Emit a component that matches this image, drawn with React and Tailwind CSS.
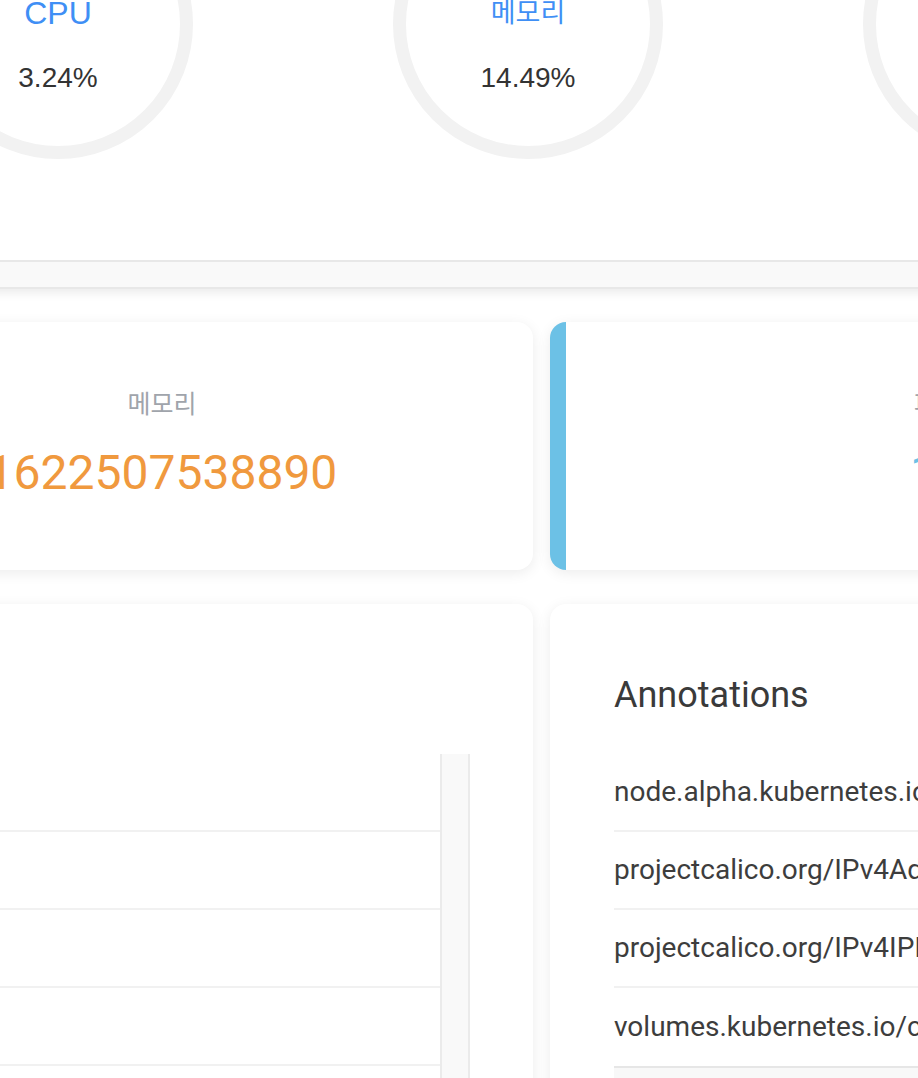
import React from "react";

const gauges = [
  { label: "CPU", value: "3.24%", korean: false },
  { label: "메모리", value: "14.49%", korean: true },
  { label: "디스크", value: "21.07%", korean: true },
];

const annotations = [
  ["node.alpha.kubernetes.io/ttl", "0"],
  ["projectcalico.org/IPv4Address", "10.0.2.15/24"],
  ["projectcalico.org/IPv4IPIPTunnelAddr", "192.168.104.0"],
  ["volumes.kubernetes.io/controller-managed-attach-detach", "true"],
];

const Gauge = ({ label, value, korean }) => (
  <div className="w-[270px] h-[270px] shrink-0 rounded-full border-[13px] border-[#f2f2f2] flex flex-col items-center pt-[87px]">
    <div
      className={`leading-[48px] text-[#3f8ff5] ${
        korean ? "text-[27px]" : "text-[32px]"
      }`}
    >
      {label}
    </div>
    <div className="mt-[20px] text-[28px] leading-[42px] text-[#333333]">
      {value}
    </div>
  </div>
);

const StatCard = ({ label, value, border, color }) => (
  <div
    className={`w-[758px] h-[248px] shrink-0 bg-white rounded-[16px] border-l-[16px] ${border} shadow-[0_3px_14px_rgba(0,0,0,0.08)] flex flex-col items-center justify-center pb-[5px]`}
  >
    <div className="text-[25px] leading-[36px] text-[#a0a4ab] font-['Noto_Sans_CJK_KR',sans-serif]">
      {label}
    </div>
    <div
      className={`mt-[23px] text-[48px] leading-[60px] font-['Roboto',sans-serif] ${color}`}
    >
      {value}
    </div>
  </div>
);

const App = () => {
  return (
    <div className="w-[918px] h-[1078px] overflow-hidden bg-white font-['Liberation_Sans','Noto_Sans_CJK_KR',sans-serif]">
      <div className="-ml-[225px] -mt-[200px] w-[1533px] flex flex-col">
        {/* usage gauges */}
        <div className="bg-white rounded-b-[16px] overflow-hidden shadow-[0_4px_10px_rgba(0,0,0,0.08)] pt-[89px]">
          <div className="flex gap-[200px] pl-[148px]">
            {gauges.map((g) => (
              <Gauge key={g.label} {...g} />
            ))}
          </div>
          <div className="mt-[101px] h-[29px] border-t-2 border-b-2 border-[#e8e8e8] bg-[#f9f9f9]" />
        </div>

        {/* stat cards */}
        <div className="mt-[33px] flex gap-[17px]">
          <StatCard
            label="메모리"
            value="1622507538890"
            border="border-[#f0993e]"
            color="text-[#f0993e]"
          />
          <StatCard
            label="파드"
            value="12"
            border="border-[#6cc1e6]"
            color="text-[#6cc1e6]"
          />
        </div>

        {/* labels / annotations */}
        <div className="mt-[34px] flex gap-[17px] items-start font-['Roboto',sans-serif] text-[#3d3d3d]">
          <div className="w-[758px] h-[600px] shrink-0 bg-white rounded-[16px] shadow-[0_3px_14px_rgba(0,0,0,0.08)] p-[64px] pr-[63px]">
            <div className="text-[36px] leading-[54px] text-[#3a3a3a]">Labels</div>
            <div className="mt-[32px] flex">
              <div className="flex-1">
                {[0, 1, 2, 3, 4].map((i) => (
                  <div key={i} className="h-[78px] border-b-2 border-[#f1f1f1]" />
                ))}
              </div>
              <div className="w-[30px] h-[400px] border-l-2 border-r-2 border-[#ebebeb] bg-[#f9f9f9]" />
            </div>
          </div>

          <div className="w-[758px] h-[600px] shrink-0 bg-white rounded-[16px] shadow-[0_3px_14px_rgba(0,0,0,0.08)] p-[64px]">
            <div className="text-[36px] leading-[54px] text-[#3a3a3a]">Annotations</div>
            <div className="mt-[32px] overflow-hidden">
              {annotations.map(([key, val], i) => (
                <div
                  key={key}
                  className={`h-[78px] flex items-center gap-[48px] whitespace-nowrap text-[28px] leading-[42px] ${
                    i < annotations.length - 1 ? "border-b-2 border-[#f1f1f1]" : ""
                  }`}
                >
                  <span>{key}</span>
                  <span>{val}</span>
                </div>
              ))}
              <div className="h-[29px] border-t-2 border-[#e6e6e6] bg-[#f8f8f8]" />
            </div>
          </div>
        </div>
      </div>
    </div>
  );
};

export default App;
